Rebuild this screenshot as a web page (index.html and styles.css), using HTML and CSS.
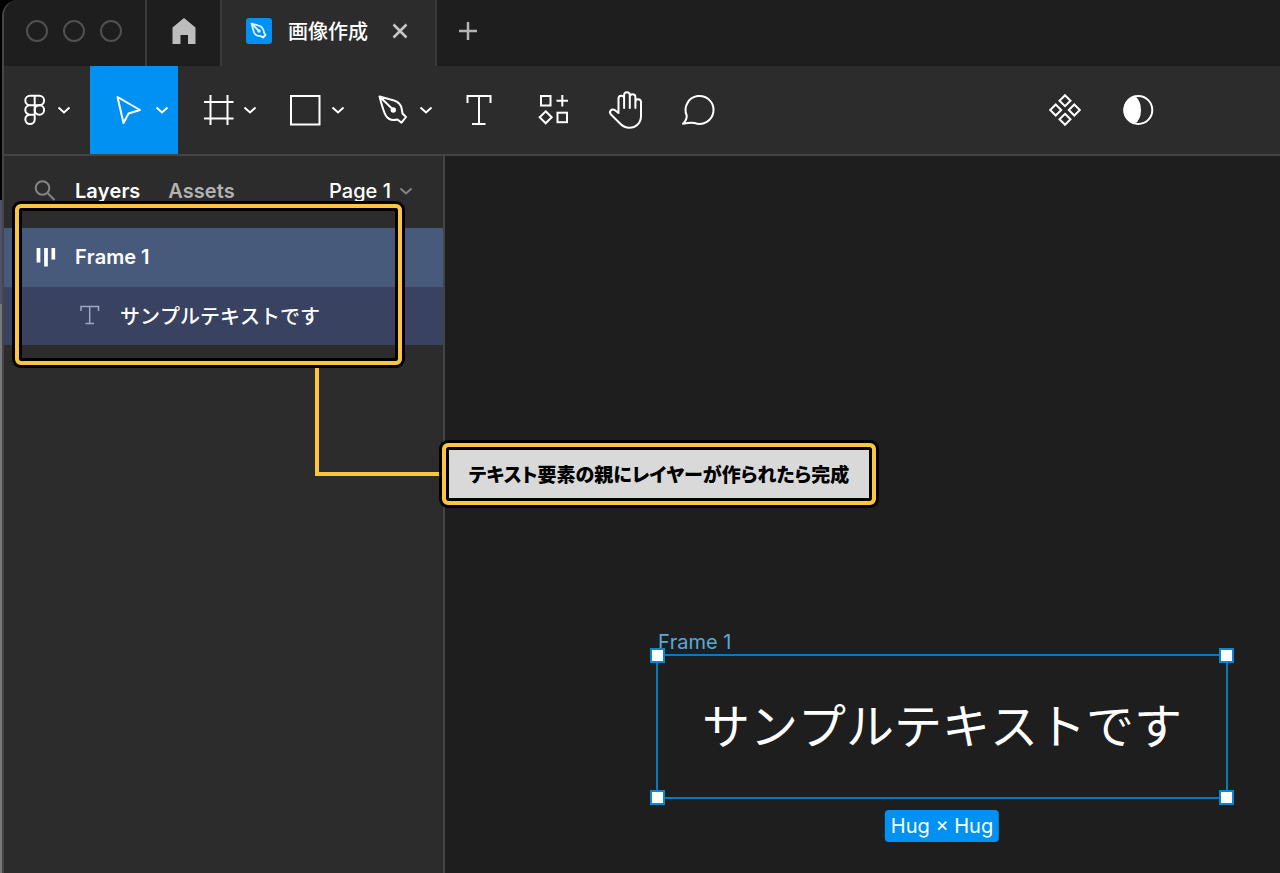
FILE: index.html
```html
<!DOCTYPE html>
<html lang="ja">
<head>
<meta charset="utf-8">
<title>画像作成</title>
<link rel="stylesheet" href="styles.css">
</head>
<body>
<div class="window">
  <header class="titlebar">
    <div class="lights"><span class="light"></span><span class="light"></span><span class="light"></span></div>
    <button class="home" aria-label="Home">
      <svg width="24" height="26" viewBox="0 0 24 26"><path d="M12 0L23.5 9.5V26H16V17H8.500V26H.5V9.500Z" fill="#bdbdbd"/></svg>
    </button>
    <div class="tab">
      <svg width="26" height="26" viewBox="0 0 26 26"><rect width="26" height="26" rx="3" fill="#0091f2"/><g fill="none" stroke="#dff6ff" stroke-width="1.800" stroke-linejoin="round"><path d="M5.500 5.500L14 8Q17.500 10 18 14.500L19.500 17L17 19.500L14.500 18Q9.500 18 8 14.500Z"/><path d="M5.500 5.500L12.500 12.500"/></g><circle cx="13" cy="13" r="1.700" fill="#dff6ff"/></svg>
      <span class="tab-name">画像作成</span>
      <button class="icon-button" aria-label="Close tab"><svg width="16" height="16" viewBox="0 0 16 16"><path d="M1.500 1.500L14.500 14.500M14.500 1.500L1.500 14.500" stroke="#c8c8c8" stroke-width="2.500"/></svg></button>
    </div>
    <button class="icon-button new-tab" aria-label="New tab"><svg width="18" height="18" viewBox="0 0 18 18"><path d="M9 0V18M0 9H18" stroke="#b4b4b4" stroke-width="2.500"/></svg></button>
  </header>

  <nav class="toolbar">
    <button class="tool tool-main" aria-label="Main menu">
      <svg class="stroke" width="42" height="48" viewBox="0 0 42 48"><path d="M20.700 9.800H16a4.700 4.700 0 0 0 0 9.400h9.400a4.700 4.700 0 0 0 0-9.400H20.700V33.500a4.700 4.700 0 1 1-4.700-4.800h4.700M20.700 19.200H16a4.700 4.700 0 0 0 0 9.500"/><circle cx="25.400" cy="24" r="4.700"/></svg>
      <svg class="stroke square" width="16" height="16" viewBox="0 0 16 16"><path d="M2.500 5.500L8 10.500L13.500 5.500"/></svg>
    </button>
    <button class="tool tool-wide selected" aria-label="Move">
      <svg class="stroke" width="48" height="48" viewBox="0 0 48 48"><path d="M11.500 11L34 24L22.500 27.500L17.500 37Z"/></svg>
      <svg class="stroke square" width="16" height="16" viewBox="0 0 16 16"><path d="M2.500 5.500L8 10.500L13.500 5.500"/></svg>
    </button>
    <button class="tool tool-wide" aria-label="Frame">
      <svg class="stroke square" width="48" height="48" viewBox="0 0 48 48"><path d="M16.500 9V39M33.500 9V39M10 16H39.500M10 32.500H39.500"/></svg>
      <svg class="stroke square" width="16" height="16" viewBox="0 0 16 16"><path d="M2.500 5.500L8 10.500L13.500 5.500"/></svg>
    </button>
    <button class="tool tool-wide" aria-label="Rectangle">
      <svg class="stroke square" width="48" height="48" viewBox="0 0 48 48"><rect x="9" y="10" width="28.500" height="28.500"/></svg>
      <svg class="stroke square" width="16" height="16" viewBox="0 0 16 16"><path d="M2.500 5.500L8 10.500L13.500 5.500"/></svg>
    </button>
    <button class="tool tool-wide" aria-label="Pen">
      <svg class="stroke" width="48" height="48" viewBox="0 0 48 48"><path d="M9.500 10.500L24 14.500Q31 17 31.700 23L32.500 27.500L36 31L31.500 36.700L27.500 33.500Q19 35.500 15.500 29Q13.500 25.500 9.500 10.500L23 23.500"/><circle cx="23.300" cy="24" r="1.700" fill="#fff"/></svg>
      <svg class="stroke square" width="16" height="16" viewBox="0 0 16 16"><path d="M2.500 5.500L8 10.500L13.500 5.500"/></svg>
    </button>
    <button class="tool" aria-label="Text">
      <svg class="stroke square" width="48" height="48" viewBox="0 0 48 48"><path d="M12.500 17V10H35.500V17M24 10V38M17 38H30.500"/></svg>
    </button>
    <button class="tool" aria-label="Resources">
      <svg class="stroke square" width="48" height="48" viewBox="0 0 48 48"><rect x="13" y="10" width="9.500" height="9.500"/><rect x="29.500" y="26.700" width="9.500" height="9.500"/><path d="M34.300 9V20.500M28.500 14.700H40M17.700 25.300L23.700 31.300L17.700 37.300L11.700 31.300Z"/></svg>
    </button>
    <button class="tool" aria-label="Hand">
      <svg class="stroke" width="48" height="48" viewBox="0 0 48 48"><path d="M17.500 27V12.500a2.800 2.800 0 0 1 5.600 0V22M23.100 13V9.200a2.800 2.800 0 0 1 5.700 0V22M28.800 11a2.800 2.800 0 0 1 5.600 0V22M34.400 16a2.800 2.800 0 0 1 5.600 0V30c0 7-5 11.700-11.700 11.700c-4 0-6.500-1.500-9-4L10 28.500c-2.500-3 .5-6.500 4-4.300L17.500 27"/></svg>
    </button>
    <button class="tool" aria-label="Comment">
      <svg class="stroke" width="48" height="48" viewBox="0 0 48 48"><path d="M12.700 29.500A14 14 0 1 1 20.500 37Q17 36 9 37.700Q13 34 12.700 29.500Z"/></svg>
    </button>
    <div class="toolbar-end">
      <button class="tool" aria-label="Components">
        <svg class="stroke square" width="48" height="48" viewBox="0 0 48 48"><path d="M24 9.200L29.500 14.700L24 20.200L18.500 14.700ZM24 27.800L29.500 33.300L24 38.800L18.500 33.300ZM14.700 18.500L20.200 24L14.700 29.500L9.200 24ZM33.300 18.500L38.800 24L33.300 29.500L27.800 24Z"/></svg>
      </button>
      <button class="tool" aria-label="Mask">
        <svg class="stroke" width="48" height="48" viewBox="0 0 48 48"><circle cx="24.300" cy="24" r="14"/><path d="M20 10.700C28 16 28 32 20 37.300A14 14 0 0 1 20 10.700Z" fill="#fff"/></svg>
      </button>
    </div>
  </nav>

  <div class="workspace">
    <aside class="sidebar">
      <div class="panel-tabs">
        <svg class="lead" width="22" height="22" viewBox="0 0 22 22" fill="none" stroke="#858585" stroke-width="2"><circle cx="8.500" cy="8" r="6.800"/><path d="M13.500 13L20.500 20"/></svg>
        <button class="text-button active">Layers</button>
        <button class="text-button">Assets</button>
        <button class="text-button page">Page 1
          <svg width="16" height="16" viewBox="0 0 16 16" fill="none" stroke="#858585" stroke-width="2"><path d="M2.500 5.500L8 10.500L13.500 5.500"/></svg>
        </button>
      </div>
      <div class="layer layer-frame">
        <svg class="lead" width="22" height="22" viewBox="0 0 22 22" stroke="#fff" stroke-width="3.700"><path d="M4.500 2V16.500M12 2V20.500M19.300 2V13.500"/></svg>
        <span>Frame 1</span>
      </div>
      <div class="layer layer-text">
        <svg class="lead" width="22" height="22" viewBox="0 0 22 22" fill="none" stroke="#a0a7c4" stroke-width="1.500"><path d="M2 7V2.500H19.500V7M10.700 2.500V19.500M6.500 19.500H15"/></svg>
        <span>サンプルテキストです</span>
      </div>
    </aside>
    <main class="canvas">
      <div class="node">
        <span class="node-label">Frame 1</span>
        <div class="node-text">サンプルテキストです</div>
        <i class="handle top left"></i><i class="handle top right"></i>
        <i class="handle bottom left"></i><i class="handle bottom right"></i>
        <span class="size-badge">Hug × Hug</span>
      </div>
    </main>
  </div>

  <div class="highlight"></div>
  <div class="connector"></div>
  <div class="callout">テキスト要素の親にレイヤーが作られたら完成</div>
</div>
</body>
</html>
```

FILE: styles.css
```css
* { box-sizing: border-box; }

body {
  margin: 0;
  padding-left: 2px;
  background: linear-gradient(#000 200px, #50526a 200px, #50526a 304px, #77777d 304px);
  font-family: Inter, "Noto Sans CJK JP", sans-serif;
  font-size: 20px;
  font-kerning: none;
  color: #fff;
}

button {
  margin: 0;
  padding: 0;
  border: 0;
  background: none;
  color: inherit;
  font: inherit;
}

svg { display: block; flex: none; }

.window {
  position: relative;
  display: flex;
  flex-direction: column;
  min-height: 100vh;
  overflow: hidden;
  border-left: 2px solid #464646;
  border-top-left-radius: 16px;
  background: #2c2c2c;
}

.titlebar {
  display: flex;
  height: 66px;
  background: #1e1e1e;
}

.lights {
  display: flex;
  align-items: center;
  gap: 15px;
  padding: 0 23px 4px 22px;
  border-right: 2px solid #3a3a3a;
}

.light {
  width: 22px;
  height: 22px;
  border: 2px solid #505050;
  border-radius: 50%;
}

.home {
  display: flex;
  align-items: center;
  justify-content: center;
  width: 75px;
  padding-bottom: 4px;
  border-right: 2px solid #3a3a3a;
}

.tab {
  display: flex;
  align-items: center;
  padding: 0 27px 4px 24px;
  border-right: 2px solid #3a3a3a;
  background: #2c2c2c;
}

.tab-name {
  margin: 0 24px 0 16px;
  padding-bottom: 2px;
  font-weight: 500;
}

.icon-button { display: flex; align-items: center; }

.new-tab { padding: 0 22px 4px; }

.toolbar {
  display: flex;
  height: 90px;
  border-bottom: 2px solid #444;
}

.tool {
  display: flex;
  align-items: center;
  justify-content: center;
  width: 73px;
}

.tool-main { width: 86px; padding: 0 18px 0 10px; }
.tool-wide { width: 88px; padding: 0 8px 0 16px; }
.selected { background: #0091f2; }

.stroke {
  fill: none;
  stroke: #fff;
  stroke-width: 2;
  stroke-linejoin: round;
  stroke-linecap: round;
}

.square { stroke-linejoin: miter; stroke-linecap: butt; }

.toolbar-end {
  display: flex;
  margin-left: auto;
  padding-right: 106px;
}

.workspace { display: flex; flex: 1; }

.sidebar {
  width: 441px;
  flex: none;
  border-right: 2px solid #444;
}

.panel-tabs {
  display: flex;
  align-items: center;
  height: 72px;
  padding: 0 29px 2px 30px;
}

.lead { margin-right: 19px; }

.text-button {
  margin-right: 28px;
  font-weight: 600;
  color: #b3b3b3;
}

.active { color: #fff; }

.page {
  display: flex;
  align-items: center;
  gap: 7px;
  margin: 0 0 0 auto;
  font-weight: 500;
  color: #fff;
}

.layer {
  display: flex;
  align-items: center;
  height: 59px;
  padding: 0 0 2px 30px;
}

.layer-frame { background: #475a7c; font-weight: 600; }
.layer-text { height: 58px; padding-left: 75px; background: #394260; font-weight: 500; }

.canvas {
  position: relative;
  flex: 1;
  background: #1e1e1e;
}

.node {
  position: absolute;
  left: 211px;
  top: 498px;
  padding: 34px 44px;
  border: 2px solid #0b79b8;
}

.node-text {
  font-size: 48px;
  line-height: 73px;
  white-space: nowrap;
}

.node-label {
  position: absolute;
  left: 0;
  bottom: 100%;
  line-height: 28px;
  color: #5aa9d8;
}

.handle {
  position: absolute;
  width: 15px;
  height: 15px;
  border: 2px solid #0b86d4;
  background: #fff;
}

.top { top: -8px; }
.bottom { bottom: -8px; }
.left { left: -8px; }
.right { right: -8px; }

.size-badge {
  position: absolute;
  top: 100%;
  left: 50%;
  margin-top: 13px;
  padding: 0 6px;
  border-radius: 4px;
  background: #0091f2;
  line-height: 32px;
  white-space: nowrap;
  transform: translateX(-50%);
}

.highlight,
.callout {
  position: absolute;
  border: 4px solid #fbc540;
  border-radius: 6px;
  box-shadow: 0 0 0 3px #000, inset 0 0 0 3px #000;
}

.highlight {
  left: 11px;
  top: 204px;
  width: 387px;
  height: 161px;
}

.connector {
  position: absolute;
  left: 311px;
  top: 368px;
  width: 124px;
  height: 108px;
  border: solid #fbc540;
  border-width: 0 0 4px 4px;
}

.callout {
  left: 438px;
  top: 443px;
  width: 434px;
  background: #d9d9d9;
  color: #000;
  font-family: "Noto Sans CJK JP", sans-serif;
  font-size: 19px;
  font-weight: 900;
  font-feature-settings: "palt";
  line-height: 54px;
  text-align: center;
  white-space: nowrap;
}
```
